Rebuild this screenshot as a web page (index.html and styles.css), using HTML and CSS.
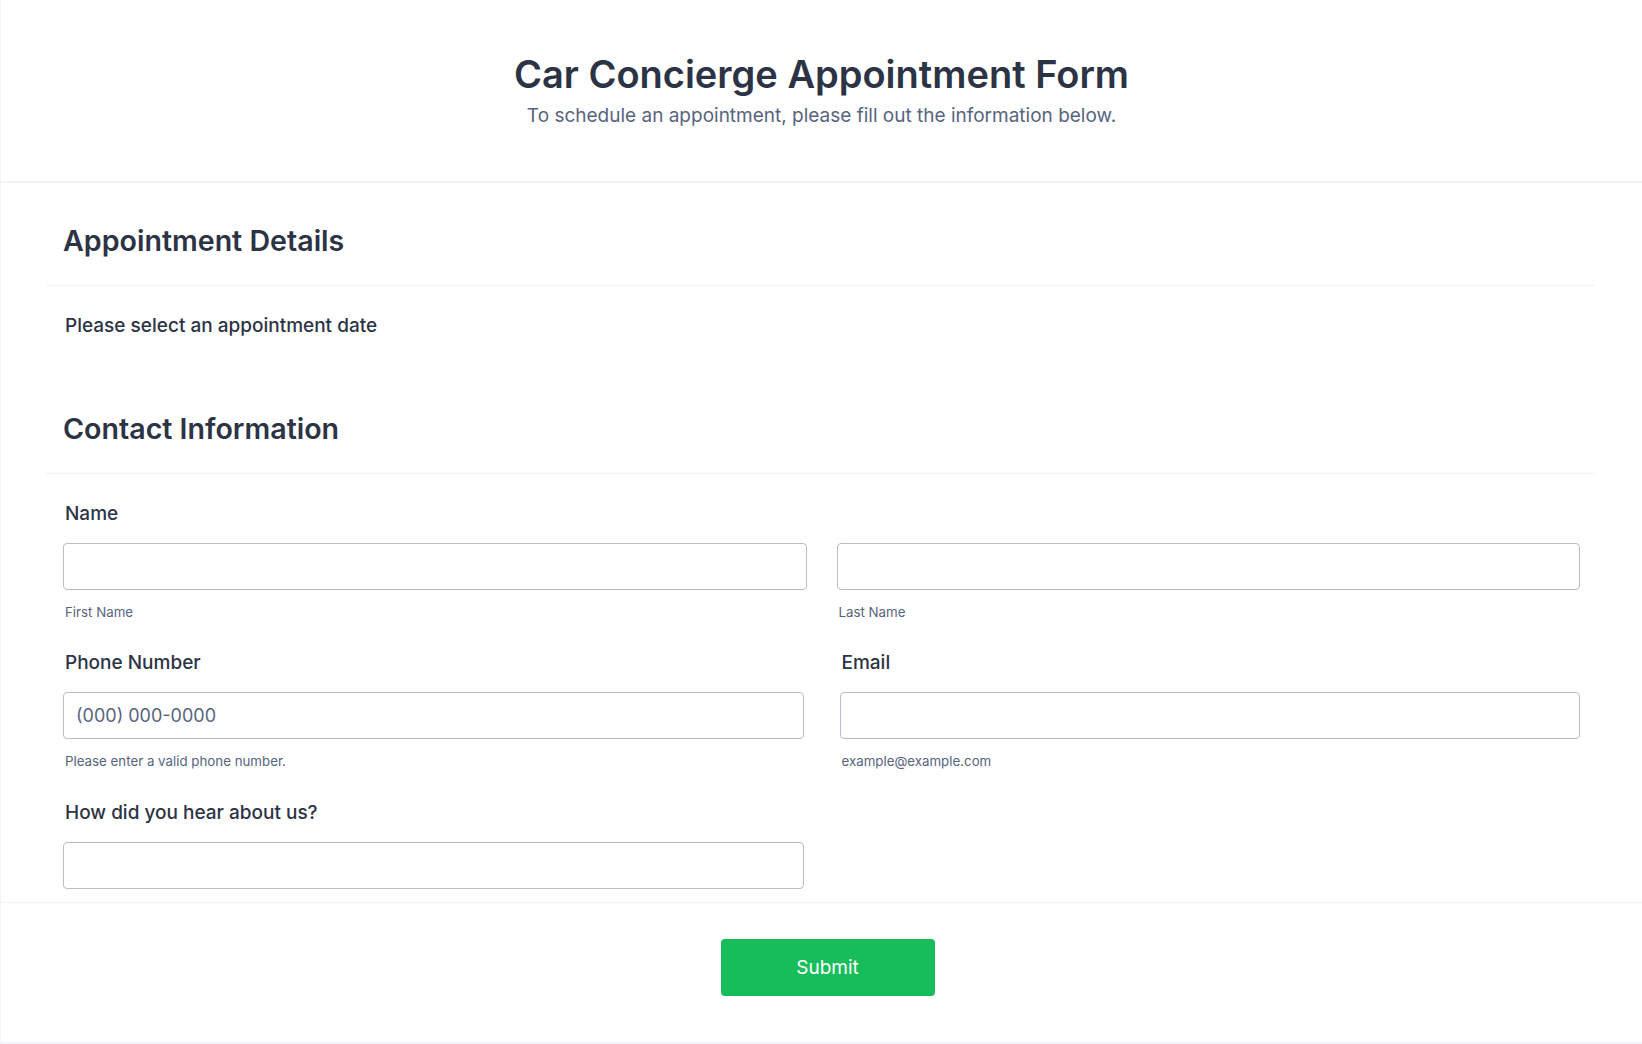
FILE: index.html
```html
<!DOCTYPE html>
<html lang="en">
<head>
<meta charset="utf-8">
<title>Car Concierge Appointment Form</title>
<link rel="stylesheet" href="styles.css">
</head>
<body>
<form class="form">
  <header class="form-header">
    <h1 class="form-title">Car Concierge Appointment Form</h1>
    <p class="form-subtitle">To schedule an appointment, please fill out the information below.</p>
  </header>
  <div class="form-body">
    <section class="section">
      <h2 class="section-title">Appointment Details</h2>
      <div class="field field-date">
        <label class="label">Please select an appointment date</label>
      </div>
    </section>
    <section class="section">
      <h2 class="section-title">Contact Information</h2>
      <div class="field field-name">
        <label class="label">Name</label>
        <div class="row">
          <div class="cell">
            <input class="input" type="text">
            <span class="sublabel">First Name</span>
          </div>
          <div class="cell">
            <input class="input" type="text">
            <span class="sublabel">Last Name</span>
          </div>
        </div>
      </div>
      <div class="row row-split">
        <div class="field">
          <label class="label">Phone Number</label>
          <input class="input" type="tel" placeholder="(000) 000-0000">
          <span class="sublabel">Please enter a valid phone number.</span>
        </div>
        <div class="field field-right">
          <label class="label">Email</label>
          <input class="input" type="email">
          <span class="sublabel">example@example.com</span>
        </div>
      </div>
      <div class="row">
        <div class="field field-last">
          <label class="label">How did you hear about us?</label>
          <input class="input" type="text">
        </div>
      </div>
    </section>
  </div>
  <footer class="form-footer">
    <button class="submit" type="button">Submit</button>
  </footer>
</form>
</body>
</html>
```

FILE: styles.css
```css
* { box-sizing: border-box; }

html, body {
  margin: 0;
  padding: 0;
  background: #ffffff;
}

body {
  font-family: Inter, "Noto Sans", "Liberation Sans", sans-serif;
  color: #2c3345;
}

.form {
  min-height: 1044px;
  border-left: 1px solid #f3f3fe;
  border-bottom: 2px solid #f3f3fe;
  display: flex;
  flex-direction: column;
}

.form-header {
  padding: 51px 0 52px;
  text-align: center;
  border-bottom: 2px solid #f3f3fe;
}

.form-title {
  margin: 0;
  font-size: 38px;
  line-height: 46px;
  font-weight: 600;
  color: #2c3345;
}

.form-subtitle {
  margin: 6px 0 0;
  font-size: 19px;
  line-height: 26px;
  font-weight: 400;
  color: #57647e;
}

.form-body {
  padding: 0 47px 13px 45px;
}

.section-title {
  margin: 0;
  padding: 41px 17px 27px;
  font-size: 28.6px;
  line-height: 34px;
  font-weight: 600;
  color: #2c3345;
  border-bottom: 1px solid #f3f3fe;
}

.section + .section .section-title {
  padding-top: 73px;
}

.field {
  padding: 0 15px 0 17px;
}

.field-date {
  padding-top: 27px;
}

.field-name {
  padding-top: 27px;
}

.label {
  display: block;
  padding-left: 2px;
  font-size: 19px;
  line-height: 26px;
  font-weight: 500;
  color: #2c3345;
}

.row {
  display: grid;
  grid-template-columns: 1fr 1fr;
  column-gap: 30px;
}

.row-split {
  padding: 0 15px 0 17px;
  column-gap: 32px;
}

.row-split .field {
  padding: 29px 0 0;
}

.row-split .field:first-child {
  padding-right: 2px;
}

.row-split .field-right {
  padding-left: 2px;
}

.input {
  display: block;
  width: 100%;
  height: 47px;
  margin-top: 16px;
  padding: 0 12px;
  border: 1px solid #b8bdc9;
  border-radius: 4px;
  background: #ffffff;
  font-family: Inter, "Noto Sans", "Liberation Sans", sans-serif;
  font-size: 18px;
  color: #2c3345;
  outline: none;
}

.input::placeholder {
  color: #57647e;
}

.sublabel {
  display: block;
  margin-top: 13px;
  padding-left: 2px;
  font-size: 13.3px;
  line-height: 18px;
  color: #57647e;
}

.row > .field-last {
  padding: 30px 0 0 17px;
  margin-right: 2px;
}

.form-footer {
  border-top: 1px solid #f3f3fe;
  padding: 36px 0 46px 12px;
  display: flex;
  justify-content: center;
}

.submit {
  width: 214px;
  height: 57px;
  border: none;
  border-radius: 4px;
  background: #18bd5b;
  color: #ffffff;
  font-family: Inter, "Noto Sans", "Liberation Sans", sans-serif;
  font-size: 19px;
  font-weight: 400;
  cursor: pointer;
}
```
